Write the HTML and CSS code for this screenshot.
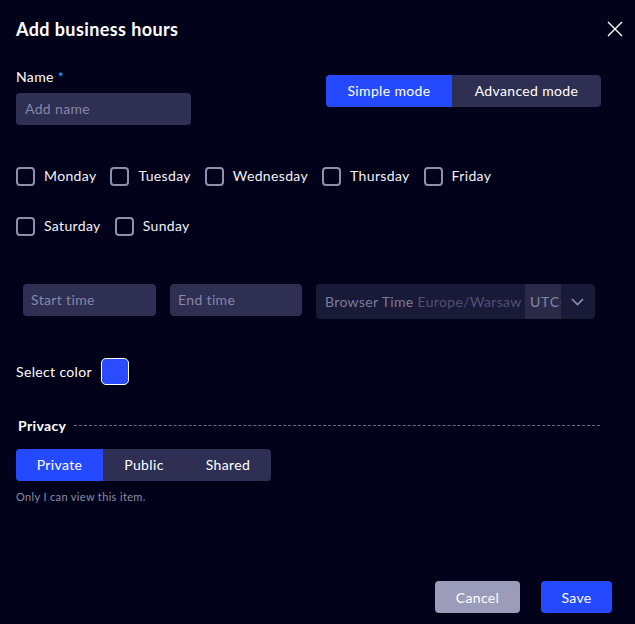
FILE: index.html
```html
<!DOCTYPE html>
<html>
<head>
<meta charset="utf-8">
<link rel="stylesheet" href="styles.css">
</head>
<body>
<div class="dialog">
  <div class="header">
    <h1 class="title">Add business hours</h1>
    <button class="close" aria-label="Close">
      <svg width="16" height="16" viewBox="0 0 16 16"><path d="M1 1L15 15M15 1L1 15" stroke="#ffffff" stroke-width="1.4" fill="none"/></svg>
    </button>
  </div>

  <div class="top-row">
    <div class="name-field">
      <div class="label">Name <span class="req">*</span></div>
      <div class="input name-input">Add name</div>
    </div>
    <div class="mode-toggle">
      <div class="seg active mode-simple">Simple mode</div>
      <div class="seg mode-adv">Advanced mode</div>
    </div>
  </div>

  <div class="days">
    <label class="day"><span class="box"></span>Monday</label>
    <label class="day"><span class="box"></span>Tuesday</label>
    <label class="day"><span class="box"></span>Wednesday</label>
    <label class="day"><span class="box"></span>Thursday</label>
    <label class="day"><span class="box"></span>Friday</label>
  </div>
  <div class="days days2">
    <label class="day"><span class="box"></span>Saturday</label>
    <label class="day"><span class="box"></span>Sunday</label>
  </div>

  <div class="time-row">
    <div class="input time-input">Start time</div>
    <div class="input time-input">End time</div>
    <div class="tz-select">
      <span class="tz-text"><span class="tz-label">Browser Time</span> <span class="tz-zone">Europe/Warsaw</span></span>
      <span class="tz-utc">UTC+</span>
      <svg class="chev" width="13" height="8" viewBox="0 0 13 8"><path d="M1 1L6.5 6.5L12 1" stroke="#8d8fae" stroke-width="1.6" fill="none"/></svg>
    </div>
  </div>

  <div class="color-row">
    <span>Select color</span>
    <span class="swatch"></span>
  </div>

  <div class="privacy-head">
    <span class="privacy-title">Privacy</span>
    <span class="dash"></span>
  </div>

  <div class="privacy-toggle">
    <div class="seg active p-private">Private</div>
    <div class="seg p-public">Public</div>
    <div class="seg p-shared">Shared</div>
  </div>
  <div class="helper">Only I can view this item.</div>

  <div class="footer">
    <button class="btn cancel">Cancel</button>
    <button class="btn save">Save</button>
  </div>
</div>
</body>
</html>
```

FILE: styles.css
```css
* { box-sizing: border-box; }
html, body {
  margin: 0;
  padding: 0;
  background: #03021b;
  width: 635px;
  height: 624px;
  overflow: hidden;
}
body {
  font-family: Lato, "Open Sans", sans-serif;
  color: #ffffff;
  font-size: 14px;
  letter-spacing: 0.35px;
}
.dialog {
  padding: 0 12px 0 16px;
  height: 624px;
  display: flex;
  flex-direction: column;
}
.header {
  display: flex;
  justify-content: space-between;
  align-items: center;
  margin-top: 17px;
  height: 24px;
}
.title {
  margin: 0;
  font-size: 18px;
  font-weight: 700;
  line-height: 24px;
  letter-spacing: 0.4px;
}
.close {
  background: none;
  border: 0;
  padding: 0;
  width: 16px;
  height: 16px;
  display: flex;
}
.top-row {
  display: flex;
  justify-content: space-between;
  margin-top: 26px;
  padding-right: 22px;
}
.label {
  line-height: 20px;
  font-size: 14px;
}
.req { color: #3fa9f5; }
.input {
  background: #2e2f52;
  border-radius: 4px;
  height: 32px;
  line-height: 32px;
  color: #8587a6;
  padding: 0 9px;
  font-size: 14px;
}
.name-input {
  width: 175px;
  margin-top: 6px;
}
.mode-toggle {
  display: flex;
  margin-top: 8px;
  height: 32px;
  border-radius: 4px;
  overflow: hidden;
  background: #2e2f52;
}
.seg {
  line-height: 32px;
  text-align: center;
  font-size: 14px;
  color: #ffffff;
}
.seg.active { background: #2449ff; }
.mode-simple { width: 126px; }
.mode-adv { width: 149px; }

.days {
  display: flex;
  gap: 14px;
  margin-top: 41px;
  height: 20px;
}
.days2 { margin-top: 30px; }
.day {
  display: flex;
  align-items: center;
  gap: 9px;
  line-height: 20px;
  font-size: 14px;
  color: #f2f2f7;
}
.box {
  width: 19px;
  height: 19px;
  border: 2px solid #8d91ad;
  border-radius: 4px;
}

.time-row {
  display: flex;
  margin-top: 48px;
  margin-left: 7px;
  align-items: flex-start;
}
.time-input {
  width: 133px;
  padding: 0 8px;
}
.time-input + .time-input { margin-left: 14px; width: 132px; }
.tz-select {
  margin-left: 14px;
  width: 279px;
  height: 35px;
  background: #191938;
  border-radius: 4px;
  display: flex;
  align-items: center;
  padding-left: 9px;
  font-size: 14px;
  white-space: nowrap;
}
.tz-text {
  width: 200px;
  overflow: hidden;
}
.tz-label { color: #7b7d99; }
.tz-zone { color: #4f5173; }
.tz-utc {
  background: #2a2a48;
  color: #8486a4;
  width: 36px;
  height: 35px;
  line-height: 35px;
  padding-left: 5px;
  overflow: hidden;
  letter-spacing: 0.8px;
}
.chev { margin-left: 10px; }

.color-row {
  display: flex;
  align-items: center;
  gap: 9px;
  margin-top: 39px;
  height: 27px;
  font-size: 14px;
}
.swatch {
  width: 28px;
  height: 27px;
  background: #2b4bff;
  border: 1px solid #ffffff;
  border-radius: 5px;
}

.privacy-head {
  display: flex;
  align-items: center;
  margin-top: 30px;
  margin-left: 2px;
  margin-right: 23px;
  height: 20px;
}
.privacy-title {
  font-weight: 700;
  font-size: 14px;
}
.dash {
  flex: 1;
  margin-left: 8px;
  border-top: 1px dashed #6a6c85;
}
.privacy-toggle {
  display: flex;
  margin-top: 14px;
  width: 255px;
  height: 32px;
  border-radius: 4px;
  overflow: hidden;
  background: #2e2f52;
}
.p-private { width: 87px; }
.p-public { width: 82px; }
.p-shared { width: 86px; }
.helper {
  margin-top: 8px;
  font-size: 11px;
  line-height: 16px;
  color: #8b8da5;
}
.footer {
  margin-top: auto;
  margin-bottom: 11px;
  display: flex;
  justify-content: flex-end;
  gap: 21px;
  padding-right: 11px;
}
.btn {
  height: 32px;
  border: 0;
  border-radius: 4px;
  font-family: Lato, "Open Sans", sans-serif;
  font-size: 14px;
  letter-spacing: 0.35px;
  color: #ffffff;
  padding: 0;
}
.cancel { width: 85px; background: #9a9cba; }
.save { width: 71px; background: #2449ff; }
```
